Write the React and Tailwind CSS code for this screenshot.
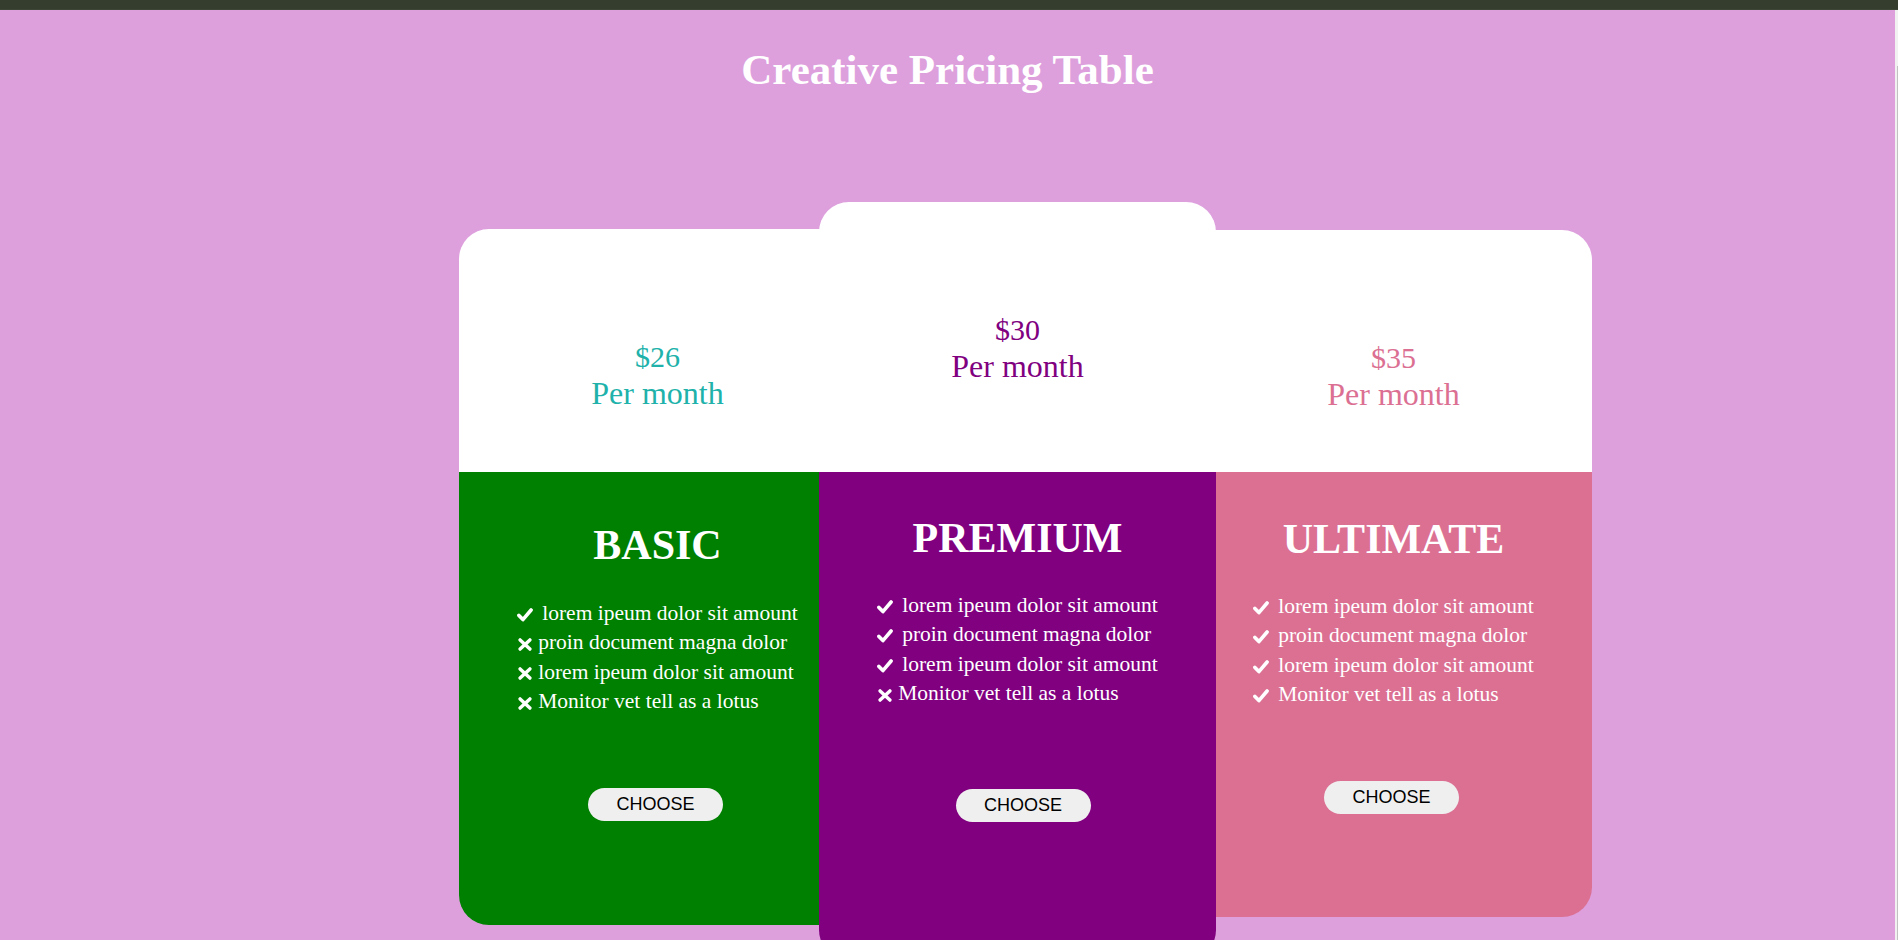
const serif = { fontFamily: '"Liberation Serif", "Times New Roman", serif' }

const cards = [
  {
    name: 'BASIC',
    price: '$26',
    wrap: 'mt-[27px] rounded-l-[30px]',
    top: 'h-[243px] pt-[109px]',
    lead: 'leading-[37px]',
    priceColor: 'text-[#20b2aa]',
    body: 'h-[453px] pt-[49px] bg-[#008000]',
    listMt: 'mt-[30px]',
    btn: 'mt-[71px] mr-[4px]',
    features: [true, false, false, false],
  },
  {
    name: 'PREMIUM',
    price: '$30',
    wrap: 'z-10 -ml-[37px] rounded-[30px]',
    top: 'h-[270px] pt-[109px]',
    lead: 'leading-[37px]',
    priceColor: 'text-[#800080]',
    body: 'h-[488px] pt-[42px] bg-[#800080]',
    listMt: 'mt-[29px]',
    btn: 'mt-[80px] ml-[11px]',
    features: [true, true, true, false],
  },
  {
    name: 'ULTIMATE',
    price: '$35',
    wrap: 'mt-[28px] -ml-[21px] rounded-r-[30px]',
    top: 'h-[242px] pt-[109px]',
    lead: 'leading-[37px]',
    priceColor: 'text-[#db7093]',
    body: 'h-[445px] pt-[43px] bg-[#db7093]',
    listMt: 'mt-[29px]',
    btn: 'mt-[71px] mr-[4px]',
    features: [true, true, true, true],
  },
]

const lines = [
  'lorem ipeum dolor sit amount',
  'proin document magna dolor',
  'lorem ipeum dolor sit amount',
  'Monitor vet tell as a lotus',
]

function Check() {
  return (
    <svg width="16" height="14" viewBox="0 0 16 14" className="inline mr-[9px]">
      <polyline points="1.9,7.4 5.9,11.6 14.1,2" fill="none" stroke="white" strokeWidth="3.6" strokeLinecap="round" strokeLinejoin="round" />
    </svg>
  )
}

function Cross() {
  return (
    <svg width="14" height="13" viewBox="0 0 14 13" className="inline ml-[1px] mr-[6px]">
      <path d="M2.1 1.9 L11.9 11.1 M11.9 1.9 L2.1 11.1" fill="none" stroke="white" strokeWidth="3.4" strokeLinecap="round" />
    </svg>
  )
}

export default function App() {
  return (
    <div className="h-[940px] overflow-hidden bg-[#dda0dd] flex flex-col" style={serif}>
      <div className="h-[10px] bg-[#343d2e] border-b border-[#3d4636] shrink-0" />

      <div className="flex flex-1 min-h-0">
        <div className="flex-1 min-w-0">
          <h1 className="mt-[36px] text-center text-white font-bold text-[43px] leading-[48px]">
            Creative Pricing Table
          </h1>

          {/* Cards */}
          <div className="mt-[108px] pl-[459px] flex items-start">
            {cards.map(c => (
              <div key={c.name} className={`relative w-[397px] shrink-0 flex flex-col overflow-hidden ${c.wrap}`}>
                <div className={`bg-white text-center ${c.top} ${c.priceColor}`}>
                  <div className={`text-[30px] ${c.lead}`}>{c.price}</div>
                  <div className={`text-[32px] ${c.lead}`}>Per month</div>
                </div>
                <div className={`flex flex-col items-center text-white ${c.body}`}>
                  <h2 className="font-bold text-[42px] leading-[48px]">{c.name}</h2>
                  <ul className={`text-[21.5px] leading-[29.4px] ${c.listMt}`}>
                    {lines.map((t, i) => (
                      <li key={i} className="whitespace-nowrap">
                        {c.features[i] ? <Check /> : <Cross />}
                        {t}
                      </li>
                    ))}
                  </ul>
                  <button
                    className={`w-[135px] h-[33px] rounded-full bg-[#efefef] text-black text-[18px] leading-none ${c.btn}`}
                    style={{ fontFamily: '"Liberation Sans", Arial, sans-serif' }}
                  >
                    CHOOSE
                  </button>
                </div>
              </div>
            ))}
          </div>
        </div>

        {/* scrollbar edge */}
        <div className="w-[3px] shrink-0 bg-[#f1f1f1] flex justify-end">
          <div className="mt-[56px] w-[1px] h-full bg-[#c1c1c1]" />
        </div>
      </div>
    </div>
  )
}
